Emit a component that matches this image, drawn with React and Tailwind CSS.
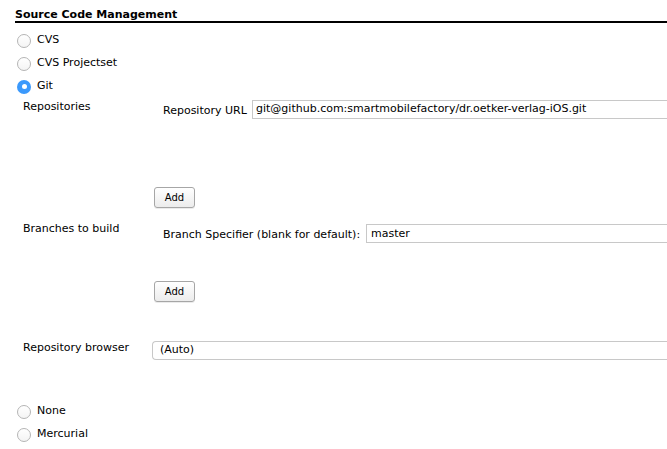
import React from "react";

const Radio = ({ checked, label }) => (
  <label className="flex items-center h-[23px] pl-[17px]">
    {checked ? (
      <span className="w-[14px] h-[14px] rounded-full bg-[#3b99fc] flex items-center justify-center">
        <span className="w-[5px] h-[5px] rounded-full bg-white" />
      </span>
    ) : (
      <span className="w-[14px] h-[14px] rounded-full border border-[#b5b5b5] bg-gradient-to-b from-white to-[#f4f4f4]" />
    )}
    <span className="ml-[6px] text-[11px] text-black">{label}</span>
  </label>
);

const AddButton = () => (
  <button className="w-[41px] h-[21px] border border-[#a6a6a6] rounded-[3px] bg-gradient-to-b from-white to-[#ececec] text-[10px] text-black shadow-[0_1px_0_rgba(0,0,0,0.08)]">
    Add
  </button>
);

export default function App() {
  return (
    <div
      className="w-[667px] h-[449px] bg-white overflow-hidden text-[11px] text-black"
      style={{ fontFamily: '"DejaVu Sans", Verdana, sans-serif' }}
    >
      {/* Section header */}
      <div className="ml-[15px] pt-[9px] border-b-2 border-black">
        <div className="font-bold leading-[12px]">Source Code Management</div>
      </div>

      <div className="pt-[6px]">
        <Radio label="CVS" />
        <Radio label="CVS Projectset" />
        <Radio checked label="Git" />
      </div>

      {/* Repositories */}
      <div className="flex mt-[2px]">
        <div className="w-[152px] pl-[23px] leading-[14px]">Repositories</div>
        <div className="flex-1">
          <div className="flex items-center pl-[11px]">
            <span className="w-[89px] leading-[14px] pt-[2px]">Repository URL</span>
            <div className="flex-1 h-[19px] border border-[#c8c8c8] border-r-0 flex items-center pl-[3px] text-[11px]">
              git@github.com:smartmobilefactory/dr.oetker-verlag-iOS.git
            </div>
          </div>
          <div className="mt-[68px] pl-[2px]">
            <AddButton />
          </div>
        </div>
      </div>

      {/* Branches */}
      <div className="flex mt-[16px]">
        <div className="w-[152px] pl-[23px] leading-[14px] -mt-[2px]">Branches to build</div>
        <div className="flex-1">
          <div className="flex items-center pl-[11px]">
            <span className="w-[203px] leading-[14px] pt-[3px]">Branch Specifier (blank for default):</span>
            <div className="flex-1 h-[19px] border border-[#c8c8c8] border-r-0 flex items-center pl-[4px] pt-[2px]">
              master
            </div>
          </div>
          <div className="mt-[38px] pl-[2px]">
            <AddButton />
          </div>
        </div>
      </div>

      {/* Repository browser */}
      <div className="flex mt-[39px]">
        <div className="w-[152px] pl-[23px] leading-[14px]">Repository browser</div>
        <div className="flex-1 h-[19px] border border-[#c8c8c8] border-r-0 rounded-l-[4px] flex items-center pl-[7px]">
          (Auto)
        </div>
      </div>

      <div className="mt-[40px]">
        <Radio label="None" />
        <Radio label="Mercurial" />
      </div>
    </div>
  );
}
